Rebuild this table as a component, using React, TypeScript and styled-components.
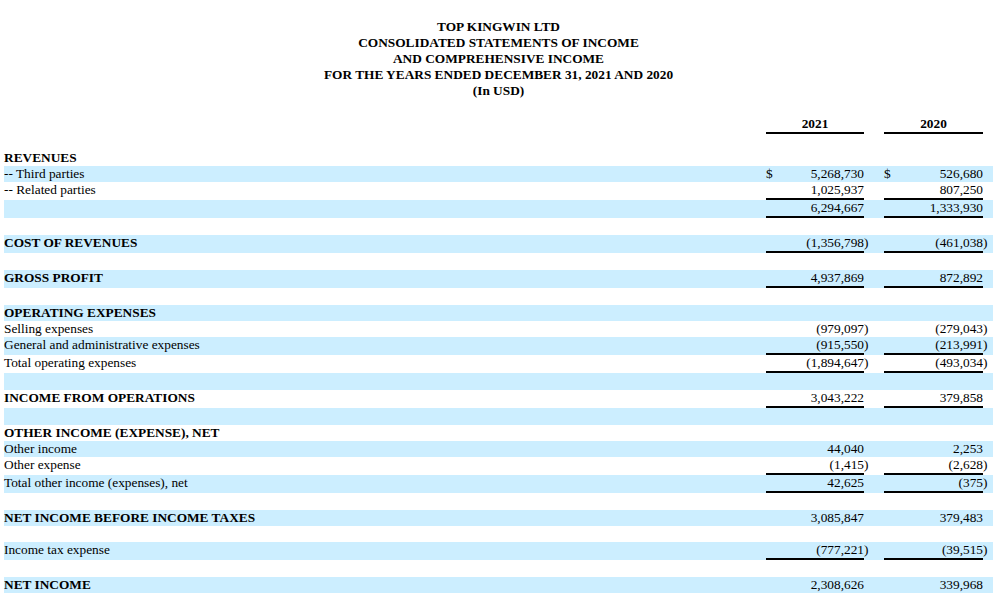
import React from "react";
import styled, { createGlobalStyle } from "styled-components";

const Global = createGlobalStyle`
  html, body { margin: 0; padding: 0; background: #fff; }
  body { font-family: "Liberation Serif", "Times New Roman", serif; font-size: 13.33px; color: #000; }
`;

const COLS = "762px 98px 6px 14px 99px 6px 4px";

const Page = styled.div`
  padding: 19px 6px 0 4px;
`;

const Title = styled.div`
  text-align: center;
  font-weight: bold;
  line-height: 16px;
  margin-bottom: 17px;
`;

const Row = styled.div<{ $blue?: boolean; $h: number }>`
  display: grid;
  grid-template-columns: ${COLS};
  height: ${(p) => p.$h}px;
  background: ${(p) => (p.$blue ? "#cceeff" : "#ffffff")};
  line-height: 16px;
  align-items: start;
`;

const Label = styled.div<{ $bold?: boolean }>`
  font-weight: ${(p) => (p.$bold ? "bold" : "normal")};
  white-space: nowrap;
`;

const Value = styled.div<{ $border?: boolean }>`
  display: flex;
  justify-content: space-between;
  height: 100%;
  box-sizing: border-box;
  border-bottom: ${(p) => (p.$border ? "2px solid #000" : "none")};
  white-space: nowrap;
`;

const YearHead = styled.div`
  text-align: center;
  font-weight: bold;
  height: 100%;
  box-sizing: border-box;
  border-bottom: 2px solid #000;
`;

const Paren = styled.div`
  white-space: nowrap;
`;

type Line = {
  label?: string;
  bold?: boolean;
  blue?: boolean;
  a?: string;
  b?: string;
  dollar?: boolean;
  border?: boolean;
  h?: number;
};

const rows: Line[] = [
  { label: "REVENUES", bold: true },
  { label: "-- Third parties", blue: true, a: "5,268,730", b: "526,680", dollar: true },
  { label: "-- Related parties", a: "1,025,937", b: "807,250", border: true },
  { blue: true, a: "6,294,667", b: "1,333,930", border: true },
  { h: 17 },
  { label: "COST OF REVENUES", bold: true, blue: true, a: "(1,356,798)", b: "(461,038)", border: true },
  { h: 17 },
  { label: "GROSS PROFIT", bold: true, blue: true, a: "4,937,869", b: "872,892", border: true },
  { h: 17 },
  { label: "OPERATING EXPENSES", bold: true, blue: true },
  { label: "Selling expenses", a: "(979,097)", b: "(279,043)" },
  { label: "General and administrative expenses", blue: true, a: "(915,550)", b: "(213,991)", border: true },
  { label: "Total operating expenses", a: "(1,894,647)", b: "(493,034)", border: true },
  { blue: true, h: 17 },
  { label: "INCOME FROM OPERATIONS", bold: true, a: "3,043,222", b: "379,858", border: true },
  { blue: true, h: 17 },
  { label: "OTHER INCOME (EXPENSE), NET", bold: true },
  { label: "Other income", blue: true, a: "44,040", b: "2,253" },
  { label: "Other expense", a: "(1,415)", b: "(2,628)", border: true },
  { label: "Total other income (expenses), net", blue: true, a: "42,625", b: "(375)", border: true },
  { h: 17 },
  { label: "NET INCOME BEFORE INCOME TAXES", bold: true, blue: true, a: "3,085,847", b: "379,483" },
  { h: 16 },
  { label: "Income tax expense", blue: true, a: "(777,221)", b: "(39,515)", border: true },
  { h: 17 },
  { label: "NET INCOME", bold: true, blue: true, a: "2,308,626", b: "339,968" },
];

function split(v?: string): [string, string] {
  if (!v) return ["", ""];
  if (v.endsWith(")")) return [v.slice(0, -1), ")"];
  return [v, ""];
}

function StatementRow({ r }: { r: Line }) {
  const [a, ap] = split(r.a);
  const [b, bp] = split(r.b);
  const hasVals = r.a !== undefined;
  const h = r.h ?? (r.border ? 18 : 16);
  return (
    <Row $blue={r.blue} $h={h}>
      <Label $bold={r.bold}>{r.label ?? ""}</Label>
      <Value $border={r.border}>
        <span>{r.dollar ? "$" : ""}</span>
        <span>{hasVals ? a : ""}</span>
      </Value>
      <Paren>{ap}</Paren>
      <div />
      <Value $border={r.border}>
        <span>{r.dollar ? "$" : ""}</span>
        <span>{hasVals ? b : ""}</span>
      </Value>
      <Paren>{bp}</Paren>
      <div />
    </Row>
  );
}

export default function App() {
  return (
    <>
      <Global />
      <Page>
        <Title>
          <div>TOP KINGWIN LTD</div>
          <div>CONSOLIDATED STATEMENTS OF INCOME</div>
          <div>AND COMPREHENSIVE INCOME</div>
          <div>FOR THE YEARS ENDED DECEMBER 31, 2021 AND 2020</div>
          <div>(In USD)</div>
        </Title>
        <Row $h={18}>
          <div />
          <YearHead>2021</YearHead>
          <div />
          <div />
          <YearHead>2020</YearHead>
          <div />
          <div />
        </Row>
        <Row $h={16} />
        {rows.map((r, i) => (
          <StatementRow key={i} r={r} />
        ))}
      </Page>
    </>
  );
}
